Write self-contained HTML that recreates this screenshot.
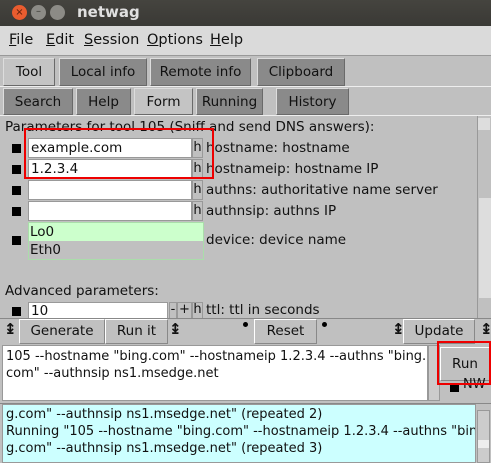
<!DOCTYPE html>
<html><head><style>
*{margin:0;padding:0;box-sizing:border-box}
body{width:491px;height:463px;overflow:hidden;background:#c0c0c0;font-family:"DejaVu Sans","Liberation Sans",sans-serif;font-size:13px;color:#111;position:relative}
.a{position:absolute;white-space:nowrap}
.tb{background:#8a8a8a;border:1px solid #6a6a6a;border-top-color:#ddd;border-left-color:#ddd;text-align:center;line-height:26px;font-size:13.5px}
.sel{background:#c4c4c4}
.btn{background:#c0c0c0;border:1px solid #888;border-top-color:#fff;border-left-color:#fff;text-align:center;line-height:23px;font-size:13.5px}
.ent{background:#fff;border:1px solid #999;line-height:18px;padding-left:2px;font-size:13.5px}
.h{background:#c0c0c0;border:1px solid #999;line-height:18px;text-align:center;width:11px}
.cb{background:#000;width:9px;height:9px}
.lab{line-height:20px;font-size:13.5px}
</style></head><body>
<div class="a" style="left:0;top:0;width:491px;height:26px;background:linear-gradient(#45443f,#3a3935)"></div>
<div class="a" style="left:12px;top:5px;width:15px;height:15px;border-radius:50%;background:#e95c2f;color:#5a1d0a;font-size:10px;text-align:center;line-height:15px">×</div>
<div class="a" style="left:31px;top:5px;width:15px;height:15px;border-radius:50%;background:#8c8b86;color:#3c3b37;font-size:10px;text-align:center;line-height:14px">–</div>
<div class="a" style="left:50px;top:5px;width:15px;height:15px;border-radius:50%;background:#8c8b86"></div>
<div class="a" style="left:77px;top:3px;color:#e0e0e0;font-weight:bold;font-size:15px">netwag</div>
<div class="a" style="left:0;top:26px;width:491px;height:30px;background:#dadada;border-bottom:1px solid #999"></div>
<div class="a" style="left:9px;top:32px;font-size:14.5px"><u>F</u>ile</div>
<div class="a" style="left:46px;top:32px;font-size:14.5px"><u>E</u>dit</div>
<div class="a" style="left:84px;top:32px;font-size:14.5px"><u>S</u>ession</div>
<div class="a" style="left:147px;top:32px;font-size:14.5px"><u>O</u>ptions</div>
<div class="a" style="left:210px;top:32px;font-size:14.5px"><u>H</u>elp</div>
<div class="a tb sel" style="left:3px;top:58px;width:52px;height:28px">Tool</div>
<div class="a tb" style="left:59px;top:58px;width:88px;height:28px">Local info</div>
<div class="a tb" style="left:150px;top:58px;width:101px;height:28px">Remote info</div>
<div class="a tb" style="left:257px;top:58px;width:88px;height:28px">Clipboard</div>
<div class="a" style="left:0;top:86px;width:491px;height:1px;background:#eee"></div>
<div class="a tb" style="left:3px;top:88px;width:70px;height:27px">Search</div>
<div class="a tb" style="left:76px;top:88px;width:55px;height:27px">Help</div>
<div class="a tb sel" style="left:134px;top:88px;width:59px;height:27px">Form</div>
<div class="a tb" style="left:196px;top:88px;width:67px;height:27px">Running</div>
<div class="a tb" style="left:276px;top:88px;width:73px;height:27px">History</div>
<div class="a" style="left:0;top:115px;width:491px;height:1px;background:#eee"></div>
<div class="a" style="left:5px;top:119px;font-size:13.5px">Parameters for tool 105 (Sniff and send DNS answers):</div>
<div class="a cb" style="left:12px;top:144px"></div>
<div class="a ent" style="left:28px;top:138px;width:164px;height:20px">example.com</div>
<div class="a h" style="left:192px;top:138px;height:20px">h</div>
<div class="a lab" style="left:206px;top:138px">hostname: hostname</div>
<div class="a cb" style="left:12px;top:165px"></div>
<div class="a ent" style="left:28px;top:159px;width:164px;height:20px">1.2.3.4</div>
<div class="a h" style="left:192px;top:159px;height:20px">h</div>
<div class="a lab" style="left:206px;top:159px">hostnameip: hostname IP</div>
<div class="a cb" style="left:12px;top:186px"></div>
<div class="a ent" style="left:28px;top:180px;width:164px;height:20px"></div>
<div class="a h" style="left:192px;top:180px;height:20px">h</div>
<div class="a lab" style="left:206px;top:180px">authns: authoritative name server</div>
<div class="a cb" style="left:12px;top:207px"></div>
<div class="a ent" style="left:28px;top:201px;width:164px;height:20px"></div>
<div class="a h" style="left:192px;top:201px;height:20px">h</div>
<div class="a lab" style="left:206px;top:201px">authnsip: authns IP</div>
<div class="a cb" style="left:12px;top:236px"></div>
<div class="a" style="left:28px;top:222px;width:176px;height:38px;border:1px solid #aaddaa;background:#c0c0c0;font-size:13.5px">
<div style="background:#ccffcc;height:18px;line-height:18px;padding-left:1px">Lo0</div>
<div style="height:18px;line-height:18px;padding-left:1px">Eth0</div></div>
<div class="a lab" style="left:206px;top:230px">device: device name</div>
<div class="a" style="left:5px;top:283px;font-size:13.5px">Advanced parameters:</div>
<div class="a cb" style="left:12px;top:307px"></div>
<div class="a ent" style="left:28px;top:302px;width:140px;height:17px;line-height:16px">10</div>
<div class="a h" style="left:169px;top:302px;height:17px;width:8px;line-height:14px">-</div>
<div class="a h" style="left:177px;top:302px;height:17px;width:15px;line-height:14px">+</div>
<div class="a h" style="left:192px;top:302px;height:17px;line-height:14px">h</div>
<div class="a" style="left:206px;top:302px;font-size:13.5px">ttl: ttl in seconds</div>
<div class="a" style="left:477px;top:116px;width:14px;height:202px;background:#c0c0c0;border-left:1px solid #999"></div>
<div class="a" style="left:478px;top:118px;width:12px;height:12px;background:#ddd"></div>
<div class="a" style="left:479px;top:198px;width:12px;height:100px;background:#ddd"></div>
<div class="a" style="left:0;top:318px;width:491px;height:1px;background:#888"></div>
<div class="a" style="left:4px;top:320px;font-size:15px;font-weight:bold">↨</div>
<div class="a btn" style="left:19px;top:319px;width:86px;height:25px">Generate</div>
<div class="a btn" style="left:105px;top:319px;width:63px;height:25px">Run it</div>
<div class="a" style="left:169px;top:320px;font-size:15px;font-weight:bold">↨</div>
<div class="a" style="left:243px;top:322px;width:5px;height:5px;border-radius:50%;background:#000"></div>
<div class="a btn" style="left:254px;top:319px;width:63px;height:25px">Reset</div>
<div class="a" style="left:322px;top:322px;width:5px;height:5px;border-radius:50%;background:#000"></div>
<div class="a" style="left:392px;top:320px;font-size:15px;font-weight:bold">↨</div>
<div class="a btn" style="left:403px;top:319px;width:72px;height:25px">Update</div>
<div class="a" style="left:480px;top:320px;font-size:15px;font-weight:bold">↨</div>
<div class="a" style="left:2px;top:345px;width:426px;height:56px;background:#fff;border:1px solid #999;padding:2px 3px;line-height:17px;overflow:hidden">105 --hostname "bing.com" --hostnameip 1.2.3.4 --authns "bing.<br>com" --authnsip ns1.msedge.net</div>
<div class="a" style="left:428px;top:345px;width:12px;height:56px;background:#ccc;border:1px solid #999"></div>
<div class="a btn" style="left:440px;top:347px;width:50px;height:34px;line-height:32px">Run</div>
<div class="a cb" style="left:450px;top:383px"></div>
<div class="a" style="left:463px;top:377px">NW</div>
<div class="a" style="left:0;top:403px;width:491px;height:1px;background:#888"></div>
<div class="a" style="left:2px;top:404px;width:474px;height:59px;background:#ccffff;border:1px solid #999;padding:1px 3px;line-height:17px;overflow:hidden">g.com" --authnsip ns1.msedge.net" (repeated 2)<br>Running "105 --hostname "bing.com" --hostnameip 1.2.3.4 --authns "bin<br>g.com" --authnsip ns1.msedge.net" (repeated 3)</div>
<div class="a" style="left:477px;top:410px;width:13px;height:53px;background:#ccc;border:1px solid #999"></div>
<div class="a" style="left:478px;top:440px;width:11px;height:8px;background:#eee"></div>
<div class="a" style="left:24px;top:128px;width:190px;height:51px;border:2px solid #e00"></div>
<div class="a" style="left:437px;top:341px;width:54px;height:44px;border:2px solid #e00"></div>
</body></html>
